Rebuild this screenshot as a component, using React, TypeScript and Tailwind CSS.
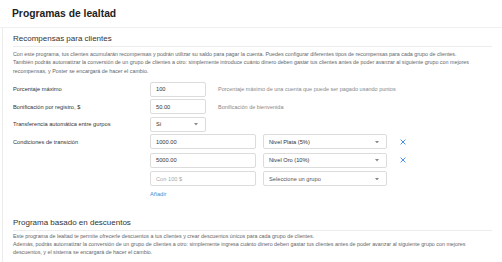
import { ReactNode } from 'react';

function Caret() {
  return (
    <svg width="4" height="2.5" viewBox="0 0 4 2.5" className="shrink-0">
      <path d="M0 0 L4 0 L2 2.5 Z" fill="#888" />
    </svg>
  );
}

function Input({ value, placeholder, width }: { value?: string; placeholder?: string; width: string }) {
  return (
    <div
      className={`${width} h-[15px] border border-[#dcdcdc] rounded-[2px] bg-white flex items-center px-[5px] text-[5.7px] ${
        value ? 'text-[#333]' : 'text-[#aaa]'
      }`}
    >
      {value ?? placeholder}
    </div>
  );
}

function Select({ value, width, muted }: { value: string; width: string; muted?: boolean }) {
  return (
    <div
      className={`${width} h-[15px] border border-[#dcdcdc] rounded-[2px] bg-white flex items-center justify-between pl-[5px] pr-[7px] text-[5.7px] ${
        muted ? 'text-[#555]' : 'text-[#333]'
      }`}
    >
      <span>{value}</span>
      <Caret />
    </div>
  );
}

function RemoveIcon() {
  return (
    <svg width="6" height="6" viewBox="0 0 6 6" className="ml-[13px]">
      <path d="M0.9 0.9 L5.1 5.1 M5.1 0.9 L0.9 5.1" stroke="#4a90d9" strokeWidth="1" strokeLinecap="round" />
    </svg>
  );
}

function Row({ label, children }: { label: string; children: ReactNode }) {
  return (
    <div className="flex items-center">
      <div className="w-[137px] text-[5.7px] text-[#333]">{label}</div>
      {children}
    </div>
  );
}

function SectionTitle({ children }: { children: ReactNode }) {
  return (
    <h2 className="text-[8px] leading-[10px] text-[#333] pb-[2px] border-b border-[#ececec] mr-[10px]">{children}</h2>
  );
}

export default function App() {
  return (
    <main
      className="w-[502px] h-[262px] bg-white overflow-hidden flex flex-col"
      style={{ fontFamily: '"Liberation Sans", Arial, sans-serif' }}
    >
      <header className="h-[28px] shrink-0 border-b border-[#f0f0f0] pl-[12px] pt-[1px] flex items-center">
        <h1 className="text-[10.3px] font-bold text-[#222]">Programas de lealtad</h1>
      </header>

      <div className="flex-1 ml-[2px] border-l border-[#ececec] pl-[10px]">
        <section className="pt-[6px]">
          <SectionTitle>Recompensas para clientes</SectionTitle>
          <p className="mt-[3px] text-[5.35px] leading-[8.3px] text-[#666] whitespace-nowrap">
            Con este programa, tus clientes acumularán recompensas y podrán utilizar su saldo para pagar la cuenta. Puedes configurar diferentes tipos de recompensas para cada grupo de clientes.
            <br />
            También podrás automatizar la conversión de un grupo de clientes a otro: simplemente introduce cuánto dinero deben gastar tus clientes antes de poder avanzar al siguiente grupo con mejores
            <br />
            recompensas, y Poster se encargará de hacer el cambio.
          </p>

          <div className="mt-[7px] flex flex-col gap-[2.5px]">
            <Row label="Porcentaje máximo">
              <Input value="100" width="w-[56px]" />
              <span className="ml-[12px] text-[5.5px] text-[#888]">
                Porcentaje máximo de una cuenta que puede ser pagado usando puntos
              </span>
            </Row>
            <Row label="Bonificación por registro, $">
              <Input value="50.00" width="w-[56px]" />
              <span className="ml-[12px] text-[5.5px] text-[#888]">Bonificación de bienvenida</span>
            </Row>
            <Row label="Transferencia automática entre gurpos">
              <Select value="Sí" width="w-[56px]" />
            </Row>
          </div>

          <div className="mt-[2.5px] flex items-start">
            <div className="w-[137px] text-[5.7px] text-[#333] pt-[4px]">Condiciones de transición</div>
            <div className="flex flex-col gap-[3.5px]">
              <div className="flex items-center">
                <Input value="1000.00" width="w-[106px]" />
                <div className="ml-[7px]">
                  <Select value="Nivel Plata (5%)" width="w-[124px]" />
                </div>
                <RemoveIcon />
              </div>
              <div className="flex items-center">
                <Input value="5000.00" width="w-[106px]" />
                <div className="ml-[7px]">
                  <Select value="Nivel Oro (10%)" width="w-[124px]" />
                </div>
                <RemoveIcon />
              </div>
              <div className="flex items-center">
                <Input placeholder="Con 100 $" width="w-[106px]" />
                <div className="ml-[7px]">
                  <Select value="Seleccione un grupo" width="w-[124px]" muted />
                </div>
              </div>
              <a className="text-[5.7px] text-[#3b8fd9] leading-[8px]">Añadir</a>
            </div>
          </div>
        </section>

        <section className="mt-[20px]">
          <SectionTitle>Programa basado en descuentos</SectionTitle>
          <p className="mt-[1px] text-[5.35px] leading-[8.3px] text-[#666] whitespace-nowrap">
            Este programa de lealtad te permite ofrecerle descuentos a tus clientes y crear descuentos únicos para cada grupo de clientes.
            <br />
            Además, podrás automatizar la conversión de un grupo de clientes a otro: simplemente ingresa cuánto dinero deben gastar tus clientes antes de poder avanzar al siguiente grupo con mejores
            <br />
            descuentos, y el sistema se encargará de hacer el cambio.
          </p>
        </section>
      </div>
    </main>
  );
}
